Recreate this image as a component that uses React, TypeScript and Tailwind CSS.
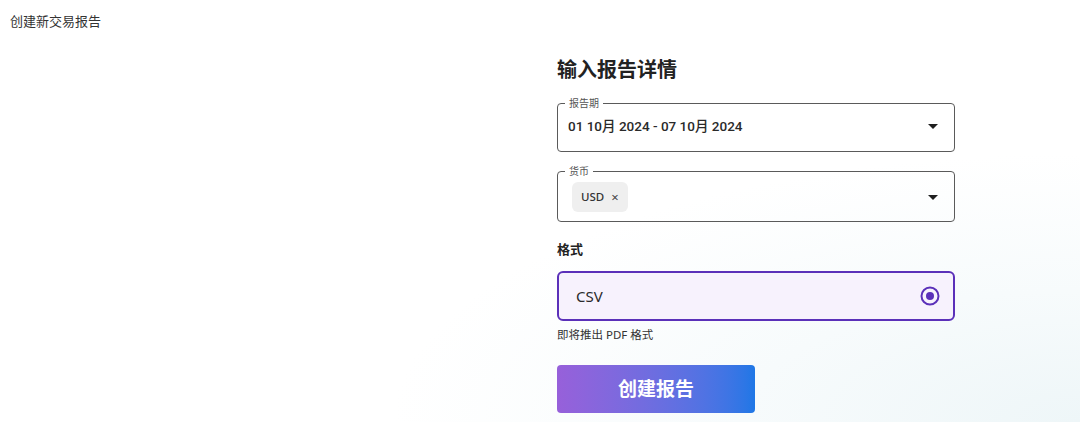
import React from 'react'

const font = { fontFamily: '"Noto Sans", "Noto Sans CJK SC", sans-serif' }

const Caret = () => (
  <svg width="10" height="5" viewBox="0 0 10 5" className="shrink-0">
    <path d="M0 0h10L5 5z" fill="#1f1f1f" />
  </svg>
)

const App = () => {
  return (
    <div
      className="w-full h-[422px] bg-[radial-gradient(ellipse_at_100%_100%,#eef6f8_0%,#f7fbfc_22%,#ffffff_45%)] px-[10px] pt-[12px] text-[#2b2b2b]"
      style={font}
    >
      <div className="text-[13px] leading-[18px] text-[#333]">创建新交易报告</div>

      <div className="ml-[547px] w-[398px] mt-[26px] flex flex-col">
        <h1 className="text-[20px] leading-[28px] font-bold text-[#222]">输入报告详情</h1>

        <fieldset className="mt-[13px] border border-[#5a5a5a] rounded-[4px] pl-[7px] pr-[16px]">
          <legend className="px-[4px] text-[10px] leading-[12px] text-[#555]">报告期</legend>
          <div className="h-[34px] mb-[8px] flex items-center justify-between">
            <span
              className="text-[13.5px] font-medium text-[#2a2a2a] pl-[3px]"
              style={{ fontFamily: 'Roboto, "Noto Sans CJK SC", sans-serif' }}
            >
              01 10月 2024 - 07 10月 2024
            </span>
            <Caret />
          </div>
        </fieldset>

        <fieldset className="mt-[13px] border border-[#5a5a5a] rounded-[4px] pl-[7px] pr-[16px]">
          <legend className="px-[4px] text-[10px] leading-[12px] text-[#555]">货币</legend>
          <div className="mt-[5px] mb-[9px] flex items-center justify-between">
            <div className="ml-[7px] h-[30px] px-[9px] rounded-[6px] bg-[#efefef] flex items-center gap-[7px]">
              <span className="text-[11.5px] font-medium text-[#333]">USD</span>
              <span className="text-[13px] text-[#444] leading-none">×</span>
            </div>
            <Caret />
          </div>
        </fieldset>

        <div className="mt-[17px] text-[13px] leading-[20px] font-bold text-[#222]">格式</div>

        <div className="mt-[12px] h-[50px] border-2 border-[#5b30b9] rounded-[6px] bg-[#f7f2fd] flex items-center justify-between pl-[17px] pr-[13px]">
          <span className="text-[15px] text-[#2a2a2a]">CSV</span>
          <svg width="20" height="20" viewBox="0 0 20 20">
            <circle cx="10" cy="10" r="8.5" fill="none" stroke="#5b30b9" strokeWidth="2" />
            <circle cx="10" cy="10" r="4" fill="#5b30b9" />
          </svg>
        </div>

        <div className="mt-[6px] text-[11.5px] leading-[16px] text-[#333]">即将推出 PDF 格式</div>

        <button className="mt-[22px] w-[198px] h-[48px] rounded-[4px] bg-gradient-to-r from-[#9760da] to-[#1e77e6] text-white text-[19px] font-bold">
          创建报告
        </button>
      </div>
    </div>
  )
}

export default App
